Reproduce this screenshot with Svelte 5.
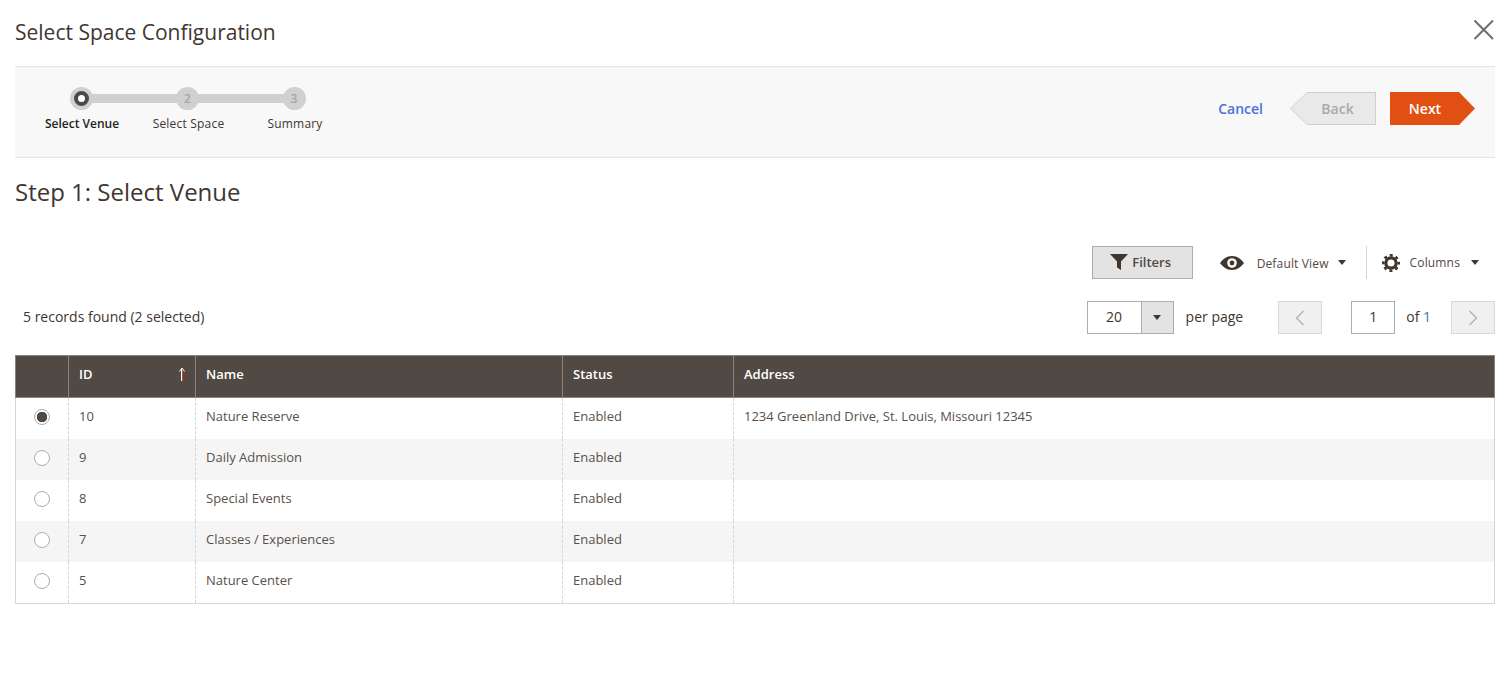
<script lang="ts">
    const steps = [
        { n: 1, label: 'Select Venue', width: 106 },
        { n: 2, label: 'Select Space', width: 106 },
        { n: 3, label: 'Summary', width: 106 },
    ];

    const rows = [
        { id: 10, name: 'Nature Reserve', status: 'Enabled', address: '1234 Greenland Drive, St. Louis, Missouri 12345', checked: true },
        { id: 9, name: 'Daily Admission', status: 'Enabled', address: '', checked: false },
        { id: 8, name: 'Special Events', status: 'Enabled', address: '', checked: false },
        { id: 7, name: 'Classes / Experiences', status: 'Enabled', address: '', checked: false },
        { id: 5, name: 'Nature Center', status: 'Enabled', address: '', checked: false },
    ];
</script>

<div class="modal">
    <header class="modal-head">
        <h1>Select Space Configuration</h1>
        <button class="close" aria-label="Close">
            <svg width="22" height="22" viewBox="0 0 22 22"><path d="M1.5 1.5 L20 20 M20 1.5 L1.5 20" stroke="#736c66" stroke-width="2" fill="none" /></svg>
        </button>
    </header>

    <section class="wizard">
        <ol class="steps">
            {#each steps as step, i}
                <li class="step" class:active={i === 0}>
                    <span class="dot">
                        {#if i === 0}<span class="ring"></span>{:else}{step.n}{/if}
                    </span>
                    <span class="step-label">{step.label}</span>
                </li>
            {/each}
        </ol>
        <div class="actions">
            <button class="cancel">Cancel</button>
            <button class="back">Back</button>
            <button class="next">Next</button>
        </div>
    </section>

    <h2>Step 1: Select Venue</h2>

    <div class="toolbar">
        <button class="filters">
            <svg width="18" height="16" viewBox="0 0 18 16"><path d="M0 0 H18 L11 7.5 V16 L7 13.5 V7.5 Z" fill="#41362f" /></svg>
            Filters
        </button>
        <div class="view">
            <svg width="24" height="14" viewBox="0 0 24 14">
                <path fill-rule="evenodd" d="M12 0 C17.5 0 21.5 3.5 24 7 C21.5 10.5 17.5 14 12 14 C6.5 14 2.5 10.5 0 7 C2.5 3.5 6.5 0 12 0 Z M12 2.2 A4.8 4.8 0 1 0 12 11.8 A4.8 4.8 0 1 0 12 2.2 Z M12 4.6 A2.4 2.4 0 1 1 12 9.4 A2.4 2.4 0 1 1 12 4.6 Z" fill="#41362f" />
            </svg>
            <span>Default View</span>
            <i class="caret"></i>
        </div>
        <div class="columns">
            <svg width="18" height="18" viewBox="-9 -9 18 18" fill="none" stroke="#41362f">
                <circle r="5.2" stroke-width="3.2" />
                <circle r="7.75" stroke-width="2.5" stroke-dasharray="3.04 3.047" stroke-dashoffset="1.52" />
            </svg>
            <span>Columns</span>
            <i class="caret"></i>
        </div>
    </div>

    <div class="pager-row">
        <span class="records">5 records found (2 selected)</span>
        <div class="pager">
            <div class="per-page">
                <span class="per-value">20</span>
                <span class="per-toggle"><i class="caret"></i></span>
            </div>
            <span class="per-label">per page</span>
            <button class="page-btn prev" aria-label="Previous page">
                <svg width="10" height="16" viewBox="0 0 10 16"><path d="M8.5 1 L1.5 8 L8.5 15" stroke="#b0b0b0" stroke-width="1.3" fill="none" /></svg>
            </button>
            <span class="page-input">1</span>
            <span class="of">of <span class="total">1</span></span>
            <button class="page-btn next-page" aria-label="Next page">
                <svg width="10" height="16" viewBox="0 0 10 16"><path d="M1.5 1 L8.5 8 L1.5 15" stroke="#b0b0b0" stroke-width="1.3" fill="none" /></svg>
            </button>
        </div>
    </div>

    <table>
        <thead>
            <tr>
                <th class="col-radio"></th>
                <th class="col-id">
                    <span class="id-head">ID
                        <svg width="7" height="14" viewBox="0 0 7 14"><path d="M3.5 14 V3" stroke="#d8402e" stroke-width="1" /><path d="M2.5 14 V2 M0.5 4.5 L3 1 L5.5 4.5" stroke="#fff" stroke-width="1" fill="none" /></svg>
                    </span>
                </th>
                <th class="col-name">Name</th>
                <th class="col-status">Status</th>
                <th>Address</th>
            </tr>
        </thead>
        <tbody>
            {#each rows as row}
                <tr>
                    <td class="radio-cell"><span class="radio" class:checked={row.checked}></span></td>
                    <td>{row.id}</td>
                    <td>{row.name}</td>
                    <td>{row.status}</td>
                    <td>{row.address}</td>
                </tr>
            {/each}
        </tbody>
    </table>
</div>

<style>
    :global(body) {
        background: #fff;
    }

    .modal {
        padding: 0 16px 0 15px;
        font-family: 'Open Sans', sans-serif;
        color: #41362f;
    }

    button {
        font-family: inherit;
        cursor: pointer;
    }

    .modal-head {
        height: 66px;
        display: flex;
        align-items: center;
        justify-content: space-between;
    }

    h1 {
        margin: 0 0 2px;
        font-size: 21px;
        font-weight: 400;
        color: #41362f;
    }

    .close {
        background: none;
        border: 0;
        padding: 0;
        margin: 0 0 6px 0;
        height: 22px;
    }

    .wizard {
        height: 90px;
        background: #f8f8f8;
        border-top: 1px solid #e3e3e3;
        border-bottom: 1px solid #e3e3e3;
        display: flex;
        justify-content: space-between;
        padding: 0 20px 0 0;
    }

    .steps {
        list-style: none;
        margin: 0;
        padding: 20px 0 0 13px;
        display: flex;
    }

    .step {
        width: 106px;
        display: flex;
        flex-direction: column;
        align-items: center;
        position: relative;
        color: #41362f;
    }

    .step:nth-child(2) {
        width: 107px;
    }

    .step:not(:last-child)::after {
        content: '';
        position: absolute;
        top: 7px;
        left: 53px;
        width: 107px;
        height: 9px;
        background: #d0d0d0;
    }

    .dot {
        width: 23px;
        height: 23px;
        border-radius: 50%;
        background: #d0d0d0;
        color: #a6a6a6;
        font-size: 12px;
        font-weight: 600;
        display: flex;
        align-items: center;
        justify-content: center;
        position: relative;
        z-index: 1;
    }

    .ring {
        width: 7px;
        height: 7px;
        border-radius: 50%;
        background: #fff;
        border: 4px solid #514943;
    }

    .step-label {
        margin-top: 6px;
        padding-left: 2px;
        font-size: 12px;
        line-height: 16px;
        letter-spacing: 0.2px;
        white-space: nowrap;
    }

    .step.active .step-label {
        color: #231f20;
        font-weight: 600;
        letter-spacing: 0;
    }

    .actions {
        display: flex;
        align-items: center;
        padding-bottom: 7px;
    }

    .cancel {
        background: none;
        border: 0;
        padding: 0;
        color: #4a72d8;
        font-size: 14px;
        font-weight: 600;
        margin-right: 27px;
    }

    .back {
        width: 86px;
        height: 33px;
        margin-right: 14px;
        padding: 0 0 0 9px;
        border: 0;
        background: #cfcfcf;
        color: #a9a9a9;
        font-size: 14px;
        font-weight: 600;
        position: relative;
        z-index: 0;
        clip-path: polygon(17px 0, 100% 0, 100% 100%, 17px 100%, 0 50%);
    }

    .back::before {
        content: '';
        position: absolute;
        inset: 1px 1px 1px 1px;
        background: #e9e9e9;
        z-index: -1;
        clip-path: polygon(16px 0, 100% 0, 100% 100%, 16px 100%, 0 50%);
    }

    .next {
        width: 85px;
        height: 33px;
        padding: 0 15px 0 0;
        border: 0;
        background: #e24f13;
        color: #fff;
        font-size: 14px;
        font-weight: 600;
        clip-path: polygon(0 0, 69px 0, 100% 50%, 69px 100%, 0 100%);
    }

    h2 {
        margin: 0;
        padding-top: 19px;
        height: 68px;
        box-sizing: border-box;
        font-size: 24px;
        line-height: 30px;
        font-weight: 400;
        color: #41362f;
    }

    .toolbar {
        margin-top: 20px;
        height: 33px;
        display: flex;
        justify-content: flex-end;
        align-items: center;
        padding-right: 16px;
    }

    .filters {
        width: 101px;
        height: 33px;
        border: 1px solid #adadad;
        background: #e3e3e3;
        color: #514943;
        font-size: 13px;
        font-weight: 600;
        display: flex;
        align-items: center;
        justify-content: center;
        gap: 4px;
        padding: 0 3px 2px 0;
        margin-right: 27px;
    }

    .view {
        display: flex;
        align-items: center;
        font-size: 12px;
        letter-spacing: 0.15px;
        color: #514943;
    }

    .view span {
        margin: 2px 9px 0 13px;
    }

    .columns {
        display: flex;
        align-items: center;
        font-size: 12px;
        letter-spacing: 0.15px;
        color: #514943;
        height: 33px;
        margin-left: 20px;
        padding-left: 15px;
        border-left: 1px solid #d6d6d6;
    }

    .columns span {
        margin: 0 11px 0 10px;
    }

    .caret {
        display: inline-block;
        width: 0;
        height: 0;
        border-left: 4px solid transparent;
        border-right: 4px solid transparent;
        border-top: 5px solid #41362f;
    }

    .pager-row {
        margin-top: 22px;
        height: 33px;
        display: flex;
        align-items: center;
        justify-content: space-between;
    }

    .records {
        padding-left: 8px;
        font-size: 14px;
        margin-top: -3px;
    }

    .pager {
        display: flex;
        align-items: center;
        font-size: 14px;
    }

    .per-page {
        display: flex;
        width: 87px;
        height: 33px;
        box-sizing: border-box;
        border: 1px solid #adadad;
    }

    .per-value {
        width: 53px;
        flex: none;
        text-align: center;
        line-height: 29px;
    }

    .per-toggle {
        width: 31px;
        flex: none;
        background: #e3e3e3;
        border-left: 1px solid #adadad;
        display: flex;
        align-items: center;
        justify-content: center;
    }

    .per-label {
        margin: -2px 35px 0 12px;
    }

    .page-btn {
        width: 44px;
        height: 33px;
        border: 1px solid #d9d9d9;
        background: #f0f0f0;
        padding: 0;
        display: flex;
        align-items: center;
        justify-content: center;
    }

    .page-input {
        width: 44px;
        height: 33px;
        box-sizing: border-box;
        border: 1px solid #adadad;
        margin-left: 29px;
        text-align: center;
        line-height: 29px;
    }

    .of {
        margin: -2px 20px 0 11px;
    }

    .total {
        color: #3277a8;
    }

    table {
        margin-top: 21px;
        width: 1480px;
        table-layout: fixed;
        border-collapse: collapse;
        font-size: 13px;
        border: 1px solid #d6d6d6;
    }

    th {
        height: 42px;
        padding: 0 10px 6px;
        box-sizing: border-box;
        background: #514943;
        color: #fff;
        font-weight: 600;
        text-align: left;
        border: 1px solid #8a837f;
    }

    .col-radio {
        width: 53px;
    }

    .col-id {
        width: 127px;
    }

    .col-name {
        width: 367px;
    }

    .col-status {
        width: 171px;
    }

    .id-head {
        display: flex;
        justify-content: space-between;
        align-items: center;
    }

    .id-head svg {
        margin-right: -1px;
    }

    td {
        height: 41px;
        padding: 0 10px 4px;
        box-sizing: border-box;
        color: #5a504a;
        border-left: 1px dashed #d6d6d6;
    }

    tbody tr:last-child td {
        height: 42px;
    }

    tbody tr:nth-child(even) td {
        background: #f5f5f5;
    }

    .radio-cell {
        text-align: center;
        padding: 0;
        line-height: 0;
        border-left: 0;
    }

    .radio {
        display: inline-block;
        width: 16px;
        height: 16px;
        margin-bottom: 2px;
        box-sizing: border-box;
        border: 1px solid #adadad;
        border-radius: 50%;
        background: #fff;
    }

    .radio.checked {
        background: radial-gradient(circle, #514943 0 5px, #fff 5.5px);
    }
</style>
